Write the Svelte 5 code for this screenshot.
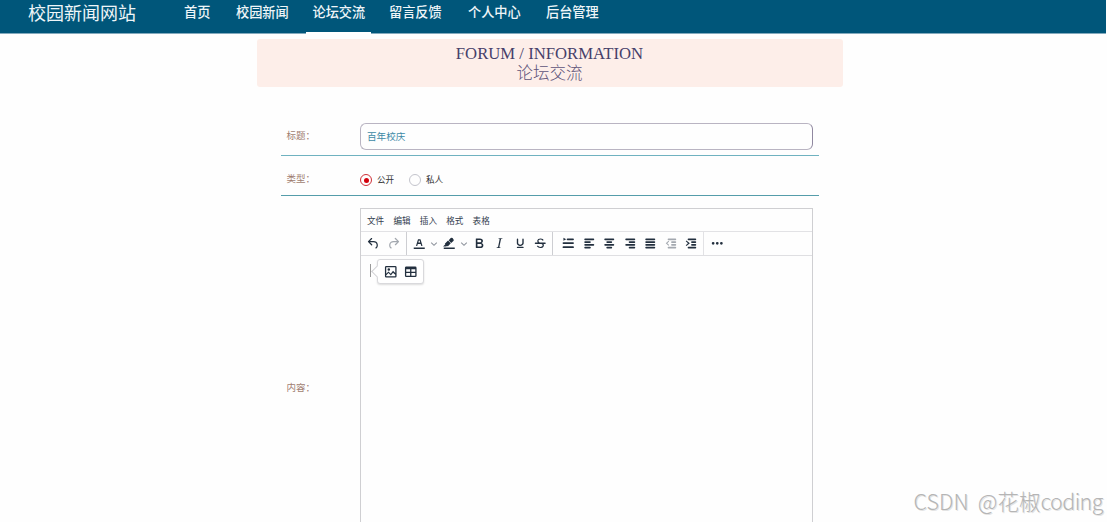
<script>
  const nav = ['首页', '校园新闻', '论坛交流', '留言反馈', '个人中心', '后台管理'];
  const menus = ['文件', '编辑', '插入', '格式', '表格'];
  const line = (x, y, w) => `M${x + 1} ${y}h${w - 2}a1 1 0 0 1 0 2.500h-${w - 2}a1 1 0 0 1 0-2.500Z`;
  const icons = {
    undo: 'M6.4 8H12c3.7 0 6.2 2 6.8 5.1.6 2.7-.4 5.6-2.3 6.8a1 1 0 0 1-1-1.8c1.1-.6 1.8-2.7 1.4-4.6-.5-2.1-2.1-3.5-4.9-3.5H6.4l3.3 3.3a1 1 0 1 1-1.4 1.4l-5-5a1 1 0 0 1 0-1.4l5-5a1 1 0 0 1 1.4 1.4L6.4 8Z',
    redo: 'M17.6 10H12c-2.8 0-4.4 1.4-4.9 3.5-.4 2 .3 4 1.4 4.6a1 1 0 1 1-1 1.8c-2-1.2-2.9-4.1-2.3-6.8.6-3 3-5.1 6.8-5.1h5.6l-3.3-3.3a1 1 0 1 1 1.4-1.4l5 5a1 1 0 0 1 0 1.4l-5 5a1 1 0 0 1-1.4-1.4l3.3-3.3Z',
    color: 'M4 18h16v2.4H4zM8.7 16h-.8a.5.5 0 0 1-.5-.6l2.7-9c.1-.3.3-.4.5-.4h2.8c.2 0 .4.1.5.4l2.7 9a.5.5 0 0 1-.5.6h-.8a.5.5 0 0 1-.4-.4l-.7-2.2c0-.3-.3-.4-.5-.4h-3.4c-.2 0-.4.1-.5.4l-.7 2.2c0 .3-.2.4-.4.4Zm2.6-7.6-.6 2a.5.5 0 0 0 .5.6h1.6a.5.5 0 0 0 .5-.6l-.6-2c0-.3-.3-.4-.5-.4h-.4c-.2 0-.4.1-.5.4Z',
    highlight: 'M4 18h16v2.4H4zM7.7 16.7H3l3.3-3.3-.7-.8L10.2 8l4 4.1-4 4.2c-.2.2-.6.2-.8 0l-.6-.7-1.1 1.1zm3.500-9 3-3.200a2 2 0 0 1 2.6 0L18 6c.7.7.7 2 0 2.7l-3.200 3.100z',
    bold: 'M7.8 19c-.3 0-.5 0-.6-.2l-.2-.5V5.7c0-.2 0-.4.2-.5l.6-.2h5c1.5 0 2.7.3 3.5 1 .7.6 1.1 1.4 1.1 2.5a3 3 0 0 1-.6 1.9c-.4.6-1 1-1.6 1.2.4.1.9.3 1.3.6s.8.7 1 1.2c.4.4.5 1 .5 1.6 0 1.3-.4 2.3-1.3 3-.8.7-2.1 1-3.8 1H7.8Zm5-8.3c.6 0 1.2-.1 1.6-.5.4-.3.6-.7.6-1.3 0-1.1-.8-1.7-2.3-1.7H9.3v3.5h3.4Zm.5 6c.7 0 1.3-.1 1.7-.4.4-.4.6-.9.6-1.5s-.2-1-.7-1.4c-.4-.3-1-.4-2-.4H9.4v3.8h4Z',
    italic: 'm16.7 4.7-.1.9h-.3c-.6 0-1 0-1.4.3-.3.3-.4.6-.5 1.1l-2.1 9.8v.6c0 .5.4.8 1.4.8h.2l-.2.8H8l.2-.8h.2c1.1 0 1.8-.5 2-1.5l2-9.8.1-.5c0-.6-.4-.8-1.4-.8h-.3l.2-.9h5.8Z',
    underline: 'M16 5c.6 0 1 .4 1 1v5.5a4 4 0 0 1-.4 1.8l-1 1.4a5.3 5.3 0 0 1-5.5 1 5 5 0 0 1-1.6-1c-.5-.4-.8-.9-1.1-1.4a4 4 0 0 1-.4-1.8V6c0-.6.4-1 1-1s1 .4 1 1v5.5c0 .3 0 .6.2 1l.6.7a3.3 3.3 0 0 0 2.2.8 3.4 3.4 0 0 0 2.2-.8c.3-.2.4-.5.6-.8l.2-.9V6c0-.6.4-1 1-1ZM8 17h8c.6 0 1 .4 1 1s-.4 1-1 1H8a1 1 0 0 1 0-2Z',
    strike: 'M15.6 8.5c-.5-.7-1-1.1-1.3-1.3-.6-.4-1.3-.6-2-.6-2.7 0-2.8 1.7-2.8 2.1 0 1.6 1.8 2 3.2 2.3 4.4.9 4.6 2.8 4.6 3.9 0 1.4-.7 4.1-5 4.1A6.2 6.2 0 0 1 7 16.4l1.5-1.1c.4.6 1.6 2 3.7 2 1.6 0 2.5-.4 3-1.2.4-.8.3-2-.8-2.6-.7-.4-1.6-.7-2.9-1-1-.2-3.9-.8-3.9-3.6C7.6 6 10.3 5 12.4 5c2.9 0 4.2 1.6 4.7 2.4l-1.5 1.1ZM5 11h14a1 1 0 0 1 0 2H5a1 1 0 0 1 0-2Z',
    list: 'M5 4l4 2.200-4 2.200z' + line(10, 5, 10) + line(4, 10.5, 16) + line(4, 16.5, 16),
    left: line(5, 5, 14) + line(5, 9, 9) + line(5, 13, 14) + line(5, 17, 9),
    center: line(5, 5, 14) + line(8, 9, 8) + line(5, 13, 14) + line(8, 17, 8),
    right: line(5, 5, 14) + line(10, 9, 9) + line(5, 13, 14) + line(10, 17, 9),
    justify: line(5, 5, 14) + line(5, 9, 14) + line(5, 13, 14) + line(5, 17, 14),
    outdent: line(7, 5, 12) + line(12, 9, 7) + line(12, 13, 7) + line(7, 17, 12) + 'M8 8.5l-4 3.5 4 3.5 1-1L6.200 12 9 9.500z',
    indent: line(7, 5, 12) + line(12, 9, 7) + line(12, 13, 7) + line(7, 17, 12) + 'M5 8l5 4-5 4-1-1.200L7.200 12 4 9.200z',
    more: 'M6 10a2 2 0 1 0 0 4 2 2 0 0 0 0-4Zm12 0a2 2 0 1 0 0 4 2 2 0 0 0 0-4Zm-6 0a2 2 0 1 0 0 4 2 2 0 0 0 0-4Z',
    image: 'M5 3h14a2 2 0 0 1 2 2v14a2 2 0 0 1-2 2H5a2 2 0 0 1-2-2V5c0-1.100.9-2 2-2Zm0 2v10l3.500-3.500 3.500 3.500 3.500-4.500L19 14V5Zm0 12.500V19h14v-2.300l-3.500-3.200-3.300 4.300-3.700-3.700ZM9 6.500a2 2 0 1 1 0 4 2 2 0 0 1 0-4Z',
    table: 'M19 4a2 2 0 0 1 2 2v12a2 2 0 0 1-2 2H5a2 2 0 0 1-2-2V6c0-1.100.9-2 2-2h14ZM5 14v4h6v-4H5Zm14 0h-6v4h6v-4Zm0-6h-6v4h6V8ZM5 12h6V8H5v4Z'
  };
  const aligns = ['list', 'left', 'center', 'right', 'justify', 'outdent', 'indent'];
</script>

{#snippet icon(name, dim = false)}
  <span class="btn" class:dim>
    <svg viewBox="0 0 24 24"><path fill-rule={name === 'image' || name === 'table' ? 'evenodd' : 'nonzero'} d={icons[name]} /></svg>
  </span>
{/snippet}

{#snippet chevron()}
  <span class="chev"><svg viewBox="0 0 10 10"><path d="M1.500 3.200 5 6.700 8.500 3.200" /></svg></span>
{/snippet}

<div class="page">
  <header>
    <div class="brand">校园新闻网站</div>
    <nav>
      {#each nav as item, i}
        <a class:active={i === 2}>{item}</a>
      {/each}
    </nav>
  </header>

  <section class="banner">
    <div>FORUM / INFORMATION</div>
    <div class="cn">论坛交流</div>
  </section>

  <form>
    <div class="row title">
      <span class="label">标题<i>：</i></span>
      <div class="input">百年校庆</div>
    </div>
    <div class="row kind">
      <span class="label">类型<i>：</i></span>
      <div class="radios">
        <span class="radio on"></span><span class="opt">公开</span>
        <span class="radio"></span><span class="opt">私人</span>
      </div>
    </div>
    <div class="row body">
      <span class="label">内容<i>：</i></span>
      <div class="editor">
        <div class="menubar">
          {#each menus as m}<span>{m}</span>{/each}
        </div>
        <div class="toolbar">
          <div class="group g1">{@render icon('undo')}{@render icon('redo', true)}</div>
          <div class="group g2">
            {@render icon('color')}{@render chevron()}{@render icon('highlight')}{@render chevron()}
            {@render icon('bold')}{@render icon('italic')}{@render icon('underline')}{@render icon('strike')}
          </div>
          <div class="group g3">
            {#each aligns as a}{@render icon(a, a === 'outdent')}{/each}
          </div>
          <div class="group g4">{@render icon('more')}</div>
        </div>
        <div class="content">
          <span class="caret"></span>
          <div class="pop">{@render icon('image')}{@render icon('table')}</div>
        </div>
      </div>
    </div>
  </form>
  <div class="mark">CSDN @花椒<span>coding</span></div>
</div>

<style>
  :global(body) { background: #fefefe; overflow: hidden; }
  .page {
    position: relative; width: 1106px; height: 522px; overflow: hidden;
    font-family: "Noto Sans CJK SC", sans-serif;
  }
  header {
    display: flex; height: 33px; background: #00567a; border-bottom: 1px solid #83aabd;
    color: #eef5f8;
  }
  .brand { width: 149.5px; padding-left: 28px; font-size: 18px; line-height: 24px; white-space: nowrap; }
  nav {
    display: grid; height: 34px;
    grid-template-columns: 52px 76.5px 76.5px 79px 78px 72px;
  }
  nav a { padding-left: 6.5px; font-size: 13.2px; line-height: 24px; white-space: nowrap; font-weight: 500; }
  nav a.active { width: 58.5px; height: 32px; border-bottom: 2px solid #fff; }
  .banner {
    width: 586px; height: 48px; margin: 5px 0 0 257px; padding: 5px 1px 0 0; box-sizing: border-box;
    border-radius: 3px; background: #fdeee9; color: #47406a; text-align: center;
    font: 16.7px/20px "Liberation Serif", serif;
  }
  .banner div { height: 19px; }
  .banner .cn { font-family: "Noto Sans CJK SC", sans-serif; font-size: 16.5px; line-height: 19px; font-weight: 300; color: #5d5479; }
  form { width: 538px; margin: 29px 0 0 281px; }
  .row { display: grid; grid-template-columns: 79px 453px; box-sizing: border-box; }
  .title { height: 40px; padding-top: 7px; border-bottom: 1px solid #6fb2c0; }
  .kind { height: 40px; border-bottom: 1px solid #559daa; }
  .body { height: 358px; margin-top: 12px; }
  .label { padding-left: 5.5px; font-size: 9.5px; line-height: 14px; color: #a07d70; white-space: nowrap; }
  .label i { font-style: normal; }
  .title .label { padding-top: 5px; }
  .kind .label { padding-top: 15px; }
  .body .label { padding-top: 172px; }
  .input {
    height: 27px; box-sizing: border-box; border: 1px solid #b9b4c2; border-radius: 6px;
    border-right-color: #9088a0; padding-left: 6px; font-size: 9.6px; line-height: 25px; color: #3d8aa6;
  }
  .radios { display: flex; align-items: center; height: 24px; padding-top: 12px; }
  .radio { width: 10px; height: 10px; border: 1px solid #c3c4cc; border-radius: 50%; display: grid; place-items: center; }
  .radio.on { border-color: #cf3038; }
  .radio.on::after { content: ""; width: 5px; height: 5px; border-radius: 50%; background: #d4000c; }
  .opt { width: 32px; padding-left: 5px; box-sizing: border-box; margin-right: 5px; font-size: 8.6px; line-height: 12px; padding-bottom: 2px; color: #333; }
  .editor { border: 1px solid #cfcfd2; border-bottom: 0; }
  .menubar {
    display: flex; gap: 9.3px; height: 22px; padding-left: 6px; border-bottom: 1px solid #e2e2e5;
    font-size: 8.6px; line-height: 22px; color: #34404f;
  }
  .menubar span { width: 17.1px; white-space: nowrap; }
  .toolbar { display: flex; height: 23px; border-bottom: 1px solid #dfdfe2; }
  .group { display: flex; align-items: center; box-sizing: border-box; border-right: 1px solid #cdced2; }
  .g1 { width: 46px; padding-left: 2px; }
  .g2 { width: 146px; padding-left: 2px; }
  .g3 { width: 151px; padding-left: 5px; border-color: #e2e2e5; }
  .g4 { border: 0; padding-left: 2.5px; }
  .btn { display: grid; place-items: center; flex: none; width: 20.5px; height: 20px; }
  .btn svg { width: 16.5px; height: 16.5px; fill: #222f3e; }
  .g1 .btn svg { width: 15px; height: 15px; }
  .btn.dim svg { fill: #a3a8af; }
  .chev { display: grid; place-items: center; width: 9.3px; }
  .chev svg { width: 8px; height: 8px; fill: none; stroke: #8c929b; stroke-width: 1.3; }
  .content { display: flex; padding: 3px 0 0 9px; }
  .caret { width: 1px; height: 13px; margin: 5px 6px 0 0; background: #999; }
  .pop {
    position: relative; display: flex; align-items: center; box-sizing: border-box;
    width: 47px; height: 25px; padding-left: 2px; background: #fff; border: 1px solid #d9d9dc;
    border-radius: 3px; box-shadow: 0 1px 2px #0002;
  }
  .pop::before {
    content: ""; position: absolute; left: -5px; top: 7px; width: 8px; height: 8px;
    border: solid #d0d0d3; border-width: 0 0 1px 1px; background: #fff; transform: rotate(45deg);
  }
  .pop .btn { position: relative; }
  .pop .btn svg { width: 15.5px; height: 15.5px; }
  .mark {
    position: absolute; left: 913.5px; top: 486px; font-size: 21.5px; line-height: 30px; font-weight: 300;
    color: #b5b5b5; text-shadow: 1px 1px 0 #ccc8; white-space: nowrap; word-spacing: 4.5px;
  }
  .mark span { letter-spacing: -.6px; }
</style>
